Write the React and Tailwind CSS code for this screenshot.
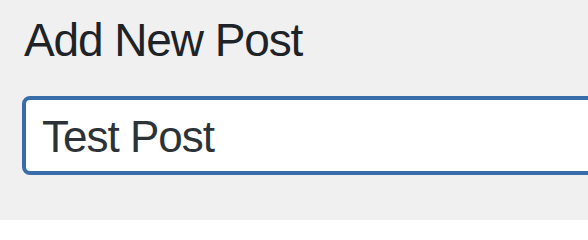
import React from 'react'

function App() {
  return (
    <div className="h-[220px] w-full overflow-hidden bg-[#f0f0f1] pl-[22px] pt-[10px] font-['Liberation_Sans',Arial,sans-serif]">
      <h1 className="ml-[2px] text-[46px] leading-[60px] font-normal tracking-[-1.1px] text-[#1d2327]">
        Add New Post
      </h1>
      <div className="mt-[26px] w-[640px]">
        <input
          type="text"
          readOnly
          defaultValue="Test Post"
          className="h-[79px] w-full rounded-[8px] border-4 border-[#386da9] bg-white pl-[16px] pt-[2px] text-[44px] tracking-[-1px] text-[#2c3338] outline-none"
        />
      </div>
    </div>
  )
}

export default App
